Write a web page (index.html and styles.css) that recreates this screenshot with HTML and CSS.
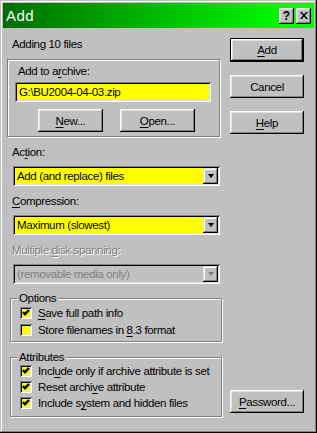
FILE: index.html
```html
<!DOCTYPE html>
<html lang="en">
<head>
    <meta charset="UTF-8">
    <title>Add</title>
    <link rel="stylesheet" href="styles.css">
</head>
<body>
    <div class="window">
        <div class="titlebar">
            <span class="title">Add</span>
            <div class="title-buttons">
                <span class="tbtn">?</span>
                <span class="tbtn">
                    <svg width="8" height="7" viewBox="0 0 8 7"><path d="M0 0h2l2 2.5 2-2.5h2l-3 3.5 3 3.5h-2l-2-2.5-2 2.5h-2l3-3.5z" fill="#000"/></svg>
                </span>
            </div>
        </div>

        <div class="content">
            <div class="left">
                <div class="line intro">Adding 10 files</div>

                <div class="frame archive">
                    <div class="line archive-label">Add to a<u>r</u>chive:</div>
                    <div class="field">G:\BU2004-04-03.zip</div>
                    <div class="archive-buttons">
                        <span class="btn btn-new"><u>N</u>ew...</span>
                        <span class="btn btn-open"><u>O</u>pen...</span>
                    </div>
                </div>

                <div class="line label">Ac<u>t</u>ion:</div>
                <div class="combo">
                    <span class="combo-text">Add (and replace) files</span>
                    <span class="drop"><span class="arrow"></span></span>
                </div>

                <div class="line label"><u>C</u>ompression:</div>
                <div class="combo">
                    <span class="combo-text">Maximum (slowest)</span>
                    <span class="drop"><span class="arrow"></span></span>
                </div>

                <div class="line label disabled">Multiple <u>d</u>isk spanning:</div>
                <div class="combo combo-off">
                    <span class="combo-text">(removable media only)</span>
                    <span class="drop"><span class="arrow"></span></span>
                </div>

                <div class="frame group options">
                    <div class="caption">Options</div>
                    <div class="check-row"><span class="check on"></span><span><u>S</u>ave full path info</span></div>
                    <div class="check-row"><span class="check"></span><span>Store filenames in <u>8</u>.3 format</span></div>
                </div>

                <div class="frame group attributes">
                    <div class="caption">Attributes</div>
                    <div class="check-row"><span class="check on"></span><span>Incl<u>u</u>de only if archive attribute is set</span></div>
                    <div class="check-row"><span class="check on"></span><span>Reset archi<u>v</u>e attribute</span></div>
                    <div class="check-row"><span class="check on"></span><span>Include s<u>y</u>stem and hidden files</span></div>
                </div>
            </div>

            <div class="right">
                <span class="btn btn-default"><u>A</u>dd</span>
                <span class="btn btn-side">Cancel</span>
                <span class="btn btn-side"><u>H</u>elp</span>
                <span class="btn btn-side btn-password"><u>P</u>assword...</span>
            </div>
        </div>
    </div>
</body>
</html>
```

FILE: styles.css
```css
* {
    box-sizing: border-box;
}

body {
    margin: 0;
    font-family: "Liberation Sans", Arial, sans-serif;
    font-size: 11.5px;
    letter-spacing: -0.35px;
    color: #000;
    background: #c0c0c0;
}

u {
    text-decoration-thickness: 1px;
    text-underline-offset: 2px;
}

.window {
    width: 317px;
    height: 433px;
    padding: 3px;
    display: flex;
    flex-direction: column;
    background: #c0c0c0;
    box-shadow: inset -1px -1px #000, inset 1px 1px #c0c0c0, inset -2px -2px #808080, inset 2px 2px #fff;
}

/* title bar */
.titlebar {
    height: 25px;
    flex: none;
    display: flex;
    align-items: center;
    justify-content: space-between;
    padding: 0 3px 0 3px;
    background: linear-gradient(to right, #006c00, #00ff00 92%);
    color: #fff;
}

.title {
    font-size: 15px;
    font-weight: normal;
    letter-spacing: 0.4px;
}

.title-buttons {
    display: flex;
    gap: 2px;
}

.tbtn {
    width: 15px;
    height: 16px;
    display: flex;
    align-items: center;
    justify-content: center;
    background: #c0c0c0;
    color: #000;
    font-weight: bold;
    font-size: 12px;
    letter-spacing: 0;
    box-shadow: inset -1px -1px #000, inset 1px 1px #fff, inset -2px -2px #808080, inset 2px 2px #dfdfdf;
}

/* body */
.content {
    flex: 1;
    display: flex;
}

.left {
    width: 220px;
    padding-left: 4px;
    display: flex;
    flex-direction: column;
}

.right {
    width: 74px;
    margin-left: 7px;
    padding-top: 10px;
    padding-bottom: 17px;
    display: flex;
    flex-direction: column;
}

.line {
    line-height: 14px;
    height: 14px;
    white-space: nowrap;
}

.intro {
    margin: 9px 0 0 5px;
}

.frame {
    border: 1px solid #808080;
    box-shadow: inset 1px 1px #fff, 1px 1px #fff;
}

.archive {
    margin-top: 8px;
    width: 213px;
    height: 78px;
    padding: 4px 0 0 7px;
}

.archive-label {
    padding-left: 3px;
}

.field {
    margin-top: 4px;
    width: 196px;
    height: 20px;
    line-height: 20px;
    padding-left: 4px;
    background: #ffff00;
    box-shadow: inset 1px 1px #808080, inset -1px -1px #fff, inset 2px 2px #000, inset -2px -2px #dfdfdf;
}

.archive-buttons {
    display: flex;
    gap: 17px;
    margin: 7px 0 0 23px;
}

.btn {
    height: 23px;
    display: flex;
    align-items: center;
    justify-content: center;
    background: #c0c0c0;
    box-shadow: inset -1px -1px #000, inset 1px 1px #fff, inset -2px -2px #808080, inset 2px 2px #dfdfdf;
}

.btn-new {
    width: 65px;
}

.btn-open {
    width: 75px;
}

.btn-default {
    height: 24px;
    border: 1px solid #000;
}

.btn-side {
    margin-top: 13px;
}

.btn-password {
    margin-top: auto;
}

.label {
    margin: 8px 0 0 5px;
}

.label + .combo {
    margin-top: 7px;
}

.disabled {
    color: #808080;
    text-shadow: 1px 1px #fff;
}

.combo {
    width: 207px;
    height: 20px;
    margin-left: 6px;
    display: flex;
    align-items: center;
    padding: 2px;
    background: #ffff00;
    box-shadow: inset 1px 1px #808080, inset -1px -1px #fff, inset 2px 2px #000, inset -2px -2px #dfdfdf;
}

.combo-text {
    flex: 1;
    padding-left: 2px;
    white-space: nowrap;
}

.drop {
    width: 15px;
    height: 16px;
    display: flex;
    align-items: center;
    justify-content: center;
    background: #c0c0c0;
    box-shadow: inset -1px -1px #000, inset 1px 1px #dfdfdf, inset -2px -2px #808080, inset 2px 2px #fff;
}

.arrow {
    width: 0;
    height: 0;
    border-left: 3.5px solid transparent;
    border-right: 3.5px solid transparent;
    border-top: 4px solid #000;
}

.combo-off {
    background: #c0c0c0;
    color: #808080;
}

.combo-off .arrow {
    border-top-color: #808080;
}

.group {
    width: 212px;
    margin-left: 3px;
    padding-left: 9px;
}

.caption {
    width: max-content;
    margin: -8px 0 -1px -3px;
    padding: 0 2px;
    line-height: 14px;
    background: #c0c0c0;
}

.options {
    margin-top: 14px;
    height: 44px;
}

.attributes {
    margin-top: 15px;
    height: 60px;
}

.check-row {
    height: 17px;
    display: flex;
    align-items: center;
    gap: 6px;
    white-space: nowrap;
}

.attributes .check-row {
    height: 16px;
}

.check {
    width: 12px;
    height: 12px;
    flex: none;
    background: #ffff00;
    box-shadow: inset 1px 1px #808080, inset -1px -1px #fff, inset 2px 2px #000, inset -2px -2px #dfdfdf;
}

.check.on {
    background: #ffff00 url("data:image/svg+xml,%3Csvg xmlns='http://www.w3.org/2000/svg' width='12' height='12'%3E%3Cpath d='M3 5l2 2.2 4-4.2' stroke='%23000' stroke-width='2.4' fill='none'/%3E%3C/svg%3E") no-repeat;
}
```
